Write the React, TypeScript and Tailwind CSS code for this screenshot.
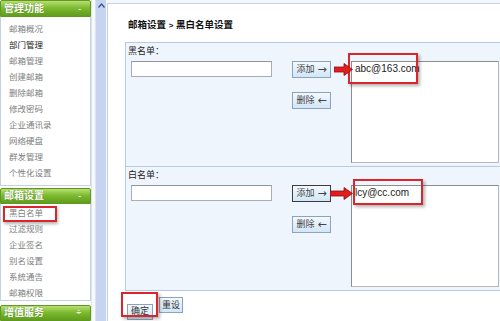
const menu1 = ['邮箱概况', '部门管理', '邮箱管理', '创建邮箱', '删除邮箱', '修改密码', '企业通讯录', '网络硬盘', '群发管理', '个性化设置'];
const menu2 = ['黑白名单', '过滤规则', '企业签名', '别名设置', '系统通告', '邮箱权限'];

const GreenBar = ({ title, mark, tall }: { title: string; mark: string; tall?: boolean }) => (
  <div
    className={`${tall ? 'h-[17px]' : 'h-[16px]'} flex items-center justify-between pl-[3px] pr-[9px] border border-[#5d9a1f] rounded-t-[2px] bg-[linear-gradient(#b9df72,#7dbb32_45%,#5f9d1b)]`}
  >
    <span className="text-[10px] font-bold text-white leading-none [text-shadow:0_0_1px_#3e6e10]">{title}</span>
    <span className="text-[8px] font-bold text-white leading-none">{mark}</span>
  </div>
);

const MenuItem = ({ label, active, marked }: { label: string; active?: boolean; marked?: boolean }) => (
  <div className={`relative h-[16px] flex items-center pl-[8px] text-[8.5px] leading-none ${active ? 'text-[#222]' : 'text-[#808080]'}`}>
    {label}
    {marked && (
      <div className="absolute left-[2px] top-[1px] w-[54px] h-[16px] border-2 border-[#d8262c] shadow-[1px_2px_3px_rgba(0,0,0,0.3)]" />
    )}
  </div>
);

const Btn = ({ label, arrow, dark }: { label: string; arrow: string; dark?: boolean }) => (
  <button
    className={`w-[39px] h-[17px] border ${dark ? 'border-[#3d3d3d]' : 'border-[#8da3bd]'} bg-[linear-gradient(#f3f9fe,#d2e6f6)] flex items-center justify-center gap-[3px] text-[9px] text-[#444] leading-none`}
  >
    <span>{label}</span>
    <span className="text-[11px] font-['DejaVu_Sans',sans-serif]">{arrow}</span>
  </button>
);

const RedArrow = ({ w }: { w: number }) => (
  <svg width={w} height="13" viewBox={`0 0 ${w} 13`}>
    <polygon
      points={`0,4 ${w - 9},4 ${w - 9},0.5 ${w - 0.5},6.5 ${w - 9},12.5 ${w - 9},9 0,9`}
      fill="#e21d1d"
      stroke="#8e1010"
      strokeWidth="0.8"
    />
  </svg>
);

const ListSection = ({
  title,
  email,
  dark,
  boxLeft,
  boxTop,
  boxH,
  arrowW,
  arrowLeft,
  bottomBorder,
}: {
  title: string;
  email: string;
  dark?: boolean;
  boxLeft: string;
  boxTop: string;
  boxH: string;
  arrowW: number;
  arrowLeft: string;
  bottomBorder?: boolean;
}) => (
  <div className={`pb-[3px] ${bottomBorder ? 'border-b border-[#b6c9e6]' : ''}`}>
    <div className="h-[14px] mt-[1px] pl-[2px] flex items-center text-[9px] text-[#222] leading-none">{title}</div>
    <div className="mt-[3px] flex items-start pl-[5px]">
      <input className="w-[141px] h-[16px] bg-white border border-[#a7aeb8] border-t-[#8f969f] outline-none" />
      <div className="ml-[20px] flex flex-col gap-[14px]">
        <Btn label="添加" arrow="→" dark={dark} />
        <Btn label="删除" arrow="←" />
      </div>
      <div className="relative ml-[20px] w-[148px] h-[102px] bg-white border border-[#b8b8b8] border-t-[#8c8c8c] border-l-[#8c8c8c]">
        <div className="pl-[3px] pt-[1px] text-[10px] text-[#222] leading-[12px]">{email}</div>
        <div className={`absolute ${boxLeft} ${boxTop} ${boxH} w-[70px] border-2 border-[#d8262c] shadow-[2px_2px_3px_rgba(0,0,0,0.3)]`} />
        <div className={`absolute ${arrowLeft} top-[1px]`}>
          <RedArrow w={arrowW} />
        </div>
      </div>
    </div>
  </div>
);

export default function App() {
  return (
    <div className="w-[500px] h-[321px] overflow-hidden flex bg-white font-['Liberation_Sans','Noto_Sans_CJK_SC',sans-serif]">
      {/* sidebar */}
      <div className="w-[91px] shrink-0 flex flex-col">
        <GreenBar title="管理功能" mark="-" tall />
        <div className="h-[169px] bg-white border border-t-0 border-[#c6d1e1] pt-[4px]">
          {menu1.map((m) => (
            <MenuItem key={m} label={m} active={m === '部门管理'} />
          ))}
        </div>
        <div className="mt-[2px]">
          <GreenBar title="邮箱设置" mark="-" />
        </div>
        <div className="h-[97px] bg-white border border-t-0 border-[#c6d1e1] pt-[1px]">
          {menu2.map((m) => (
            <MenuItem key={m} label={m} marked={m === '黑白名单'} />
          ))}
        </div>
        <div className="mt-[4px]">
          <GreenBar title="增值服务" mark="÷" />
        </div>
      </div>

      {/* splitter */}
      <div className="w-[4px] shrink-0 border-l border-[#dfe4ec] bg-[#f7f9fc]" />
      <div className="w-[11px] shrink-0 bg-[#c7d4f0] border-l border-[#dbe3f5] flex justify-center pt-[3px]">
        <svg width="7" height="5" viewBox="0 0 7 5">
          <path d="M0.5 4.5 L3.5 1 L6.5 4.5" fill="none" stroke="#34548f" strokeWidth="1.3" />
        </svg>
      </div>
      <div className="w-[1px] shrink-0 bg-[#f3f6fb]" />

      {/* content */}
      <div className="flex-1 min-w-0 bg-[#f3f6fb]">
        <div className="mt-[3px] h-[318px] bg-white border-t border-l border-[#c4d2ea]">
          <div className="pt-[15px] pl-[20px] h-[30px] text-[9.5px] font-bold text-[#111] leading-[12px]">
            邮箱设置 <span className="text-[8px]">&gt;</span> 黑白名单设置
          </div>
          <div className="mt-[8px] ml-[17px] bg-[#eff5fd] border-t border-l border-b border-[#b6c9e6]">
            <ListSection
              title="黑名单："
              email="abc@163.com"
              boxLeft="-left-[4px]"
              boxTop="-top-[9px]"
              boxH="h-[31px]"
              arrowW={19}
              arrowLeft="-left-[18px]"
              bottomBorder
            />
            <ListSection
              title="白名单："
              email="lcy@cc.com"
              dark
              boxLeft="left-[1px]"
              boxTop="-top-[7px]"
              boxH="h-[26px]"
              arrowW={23}
              arrowLeft="-left-[22px]"
            />
          </div>
          <div className="mt-[6px] ml-[19px] flex gap-[6px]">
            <div className="relative">
              <button className="w-[26px] h-[16px] border border-[#8da3bd] bg-[linear-gradient(#f3f9fe,#d2e6f6)] text-[9px] text-[#333] leading-none">
                确定
              </button>
              <div className="absolute -left-[6px] -top-[5px] w-[37px] h-[25px] border-2 border-[#d8262c] shadow-[2px_2px_3px_rgba(0,0,0,0.3)]" />
            </div>
            <button className="w-[24px] h-[16px] border border-[#8da3bd] bg-[linear-gradient(#f3f9fe,#d2e6f6)] text-[9px] text-[#333] leading-none">
              重设
            </button>
          </div>
        </div>
      </div>
    </div>
  );
}
